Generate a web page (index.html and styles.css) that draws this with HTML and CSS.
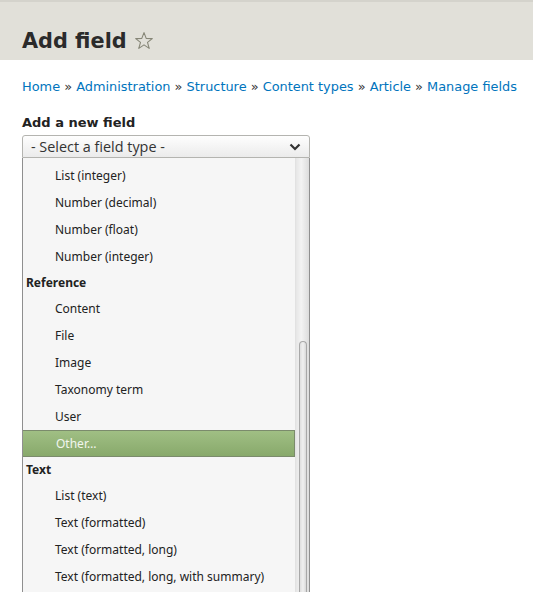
FILE: index.html
```html
<!DOCTYPE html>
<html>
<head>
<meta charset="utf-8">
<link rel="stylesheet" href="styles.css">
</head>
<body>
<header class="page-header">
  <h1 class="title">Add field <svg class="star" width="20" height="20" viewBox="0 0 20 20"><path d="M10 1.6 L12.2 7.4 L18.3 7.6 L13.5 11.4 L15.2 17.4 L10 13.9 L4.8 17.4 L6.5 11.4 L1.7 7.6 L7.8 7.4 Z" fill="none" stroke="#868677" stroke-width="1.1" stroke-linejoin="round"/></svg></h1>
</header>
<main class="content">
  <nav class="breadcrumb"><a>Home</a> » <a>Administration</a> » <a>Structure</a> » <a>Content types</a> » <a>Article</a> » <a>Manage fields</a></nav>
  <div class="field-label">Add a new field</div>
  <div class="select">
    <span>- Select a field type -</span>
    <svg class="chev" width="12" height="8" viewBox="0 0 12 8"><path d="M1.5 1.5 L6 6 L10.5 1.5" fill="none" stroke="#333" stroke-width="2.2"/></svg>
  </div>
  <div class="dropdown">
    <ul class="options">
      <li class="opt">List (integer)</li>
      <li class="opt">Number (decimal)</li>
      <li class="opt">Number (float)</li>
      <li class="opt">Number (integer)</li>
      <li class="group">Reference</li>
      <li class="opt">Content</li>
      <li class="opt">File</li>
      <li class="opt">Image</li>
      <li class="opt">Taxonomy term</li>
      <li class="opt">User</li>
      <li class="opt selected">Other…</li>
      <li class="group">Text</li>
      <li class="opt">List (text)</li>
      <li class="opt">Text (formatted)</li>
      <li class="opt">Text (formatted, long)</li>
      <li class="opt">Text (formatted, long, with summary)</li>
    </ul>
    <div class="scrollbar"><div class="thumb"></div></div>
  </div>
</main>
</body>
</html>
```
FILE: styles.css
```css
html, body {
  margin: 0;
  padding: 0;
  background: #fff;
  overflow: hidden;
}
body {
  font-family: "DejaVu Sans", sans-serif;
  color: #222;
  height: 592px;
}
.page-header {
  background: #e1e0d9;
  border-top: 2px solid #d4d3cc;
  height: 58px;
  padding: 0 22px;
  box-sizing: content-box;
}
.title {
  margin: 0;
  padding-top: 26px;
  font-size: 20.8px;
  font-weight: bold;
  line-height: 26px;
  color: #2b2b2b;
  display: flex;
  align-items: center;
  gap: 7px;
}
.star {
  margin-top: -1px;
}
.content {
  padding: 0 22px;
}
.breadcrumb {
  margin-top: 18px;
  font-size: 12.9px;
  line-height: 18px;
  color: #333;
  white-space: nowrap;
}
.breadcrumb a {
  color: #0074bd;
}
.field-label {
  margin-top: 19px;
  font-size: 13px;
  font-weight: bold;
  line-height: 16px;
  color: #222;
}
.select {
  margin-top: 4px;
  width: 288px;
  height: 23px;
  box-sizing: border-box;
  border: 1px solid #b4b4b0;
  border-radius: 3px 3px 0 0;
  background: linear-gradient(#fefefe, #ebebeb);
  display: flex;
  align-items: center;
  justify-content: space-between;
  padding: 0 8px 0 8px;
  font-family: "Open Sans", "Noto Sans", sans-serif;
  font-size: 14.4px;
  color: #333;
}
.dropdown {
  width: 288px;
  height: 440px;
  box-sizing: border-box;
  border-left: 1px solid #8f8f8f;
  border-right: 1px solid #8f8f8f;
  background: #f6f6f6;
  display: flex;
  overflow: hidden;
}
.options {
  list-style: none;
  margin: 0;
  padding: 4px 0 0 0;
  flex: 1;
  font-family: "Noto Sans", "Open Sans", sans-serif;
  font-size: 12px;
  color: #222;
}
.opt {
  height: 27px;
  line-height: 27px;
  padding-left: 32px;
  white-space: nowrap;
}
.group {
  height: 25px;
  line-height: 25px;
  padding-left: 3px;
  font-weight: bold;
}
.opt.selected {
  margin-left: -1px;
  padding-left: 33px;
  box-sizing: border-box;
  border: 1px solid #7b8b6c;
  background: linear-gradient(#a0bf84, #88a96b);
  color: #f2f6ee;
  line-height: 25px;
}
.scrollbar {
  width: 14px;
  background: linear-gradient(90deg, #e6e6e6, #f3f3f3 40%, #dcdcdc);
  border-left: 1px solid #e2e2e2;
  display: flex;
  flex-direction: column;
  padding-top: 183px;
  box-sizing: border-box;
}
.thumb {
  flex: 1;
  margin: 0 2px 0 3px;
  border: 1px solid #a8a8a8;
  border-bottom: none;
  border-radius: 5px 5px 0 0;
  background: linear-gradient(90deg, #dedede, #f0f0f0 50%, #d8d8d8);
}
```
